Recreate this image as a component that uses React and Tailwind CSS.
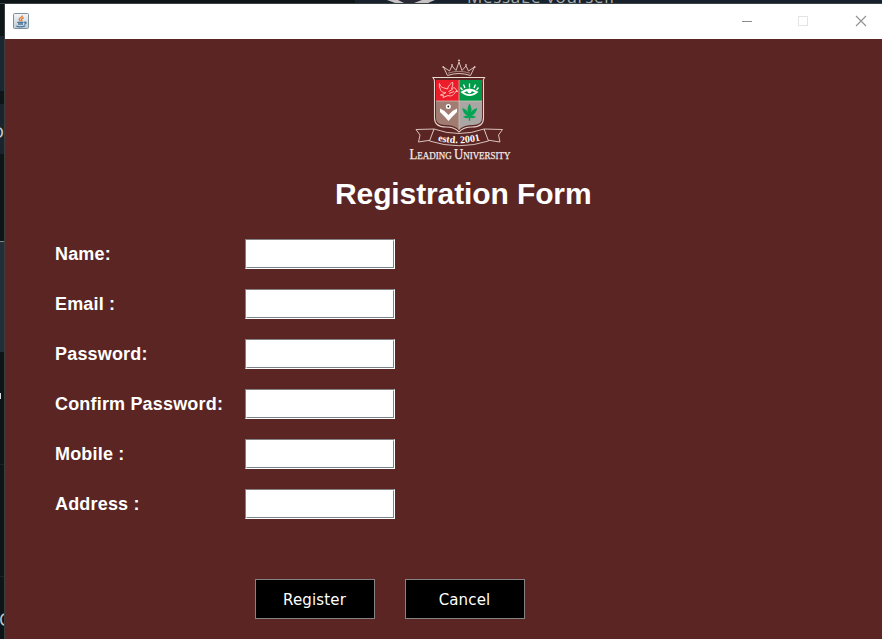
import React from "react";

const fields = ["Name:", "Email :", "Password:", "Confirm Password:", "Mobile :", "Address :"];

function JavaIcon() {
  return (
    <svg width="16" height="16" viewBox="0 0 16 16" className="-mt-[2px] block">
      <defs>
        <linearGradient id="jbg" x1="0" y1="0" x2="0" y2="1">
          <stop offset="0" stopColor="#f4f7f9" />
          <stop offset="1" stopColor="#bccbd6" />
        </linearGradient>
      </defs>
      <rect x="0.5" y="0.5" width="15" height="15" rx="1" fill="url(#jbg)" stroke="#7d8e9c" />
      <path d="M9.500 2.500C9.500 4.500 6 4.500 6.200 6.300C6.300 7.200 7.300 7.500 7.300 8.200M10.800 4.800C9 5.200 8.200 6 8.700 6.800C9.100 7.400 8.800 7.800 8.400 8.200" fill="none" stroke="#e8792b" strokeWidth="1.400" />
      <path d="M4.200 9.300H10.500M5 11H10M3.300 13.200C5.300 13.900 9.800 13.700 12.300 12.900M11 9.300C13.700 8.500 13.900 10.600 11.200 11.300" fill="none" stroke="#4d7599" strokeWidth="1.300" />
    </svg>
  );
}

function UniversityLogo() {
  return (
    <svg width="104" height="104" viewBox="408 58 104 104" className="block">
      <defs>
        <clipPath id="shield">
          <path d="M436 80H482V118Q482 125 473 125Q463 125 459 130Q455 125 445 125Q436 125 436 118Z" />
        </clipPath>
        <path id="motto" d="M430 138.500Q459 148 488 138" />
      </defs>
      <g fill="none" stroke="#d9c2bc" strokeWidth="1" strokeLinejoin="round">
        <path d="M447.500 75.500L443.500 67L449.500 71L452 66L456 70.500L459 62L462 70.500L466 66L468.500 71L474.500 67L470.500 75.500Q459 71.500 447.500 75.500Z" />
        <path d="M448 73.200Q459 69.500 470 73.200" strokeWidth="0.6" />
      </g>
      <g fill="#d9c2bc">
        <circle cx="443.200" cy="67" r="0.9" />
        <circle cx="452" cy="65" r="0.9" />
        <circle cx="459" cy="60.500" r="1.100" />
        <circle cx="466" cy="65" r="0.9" />
        <circle cx="474.700" cy="67" r="0.9" />
      </g>
      <path d="M433 77.500H484.500Q482.500 80 483.500 83V118Q483.500 127 472 127Q463 127 459 132Q455 127 446 127Q434.500 127 434.500 118V83Q435 80 433 77.500Z" fill="#5a2523" stroke="#ead8d2" strokeWidth="1.100" />
      <g clipPath="url(#shield)">
        <path d="M436 80H459V101H436Z" fill="#ed1c2b" />
        <path d="M459 80H482V101H459Z" fill="#009b48" />
        <path d="M436 101H459V132H436Z" fill="#a17c72" />
        <path d="M459 101H482V132H459Z" fill="#aaa6a4" />
        <path d="M459 80V131M436 101H482" stroke="#d7c5b9" strokeWidth="0.7" />
      </g>
      <path d="M439.500 83.500C440.500 88 443.500 87.500 447.500 89C448 85.500 451 84 452.500 82C453.500 84.500 452 87 451.500 89C453.500 87 456 87.800 456 90L457.800 91.300L455.500 91.700C454.500 94.500 451 97 448 95.500L443 97.500L443.500 95.500L440.500 95C443 94 445 93.500 446 92.500C442.500 92.500 440 91 440.500 89C439.500 88 439 86 439.500 83.500M448.500 91.500L452.500 89.500M449 93.500L454 91.500" fill="none" stroke="#ffc4bc" strokeWidth="1" strokeLinejoin="round" />
      <path d="M460.500 92Q469.500 85 478.500 92Q469.500 100 460.500 92Z" fill="#fff" />
      <path d="M464 92.500Q469.500 89 475 92.500Q469.500 96 464 92.500Z" fill="#009b48" />
      <circle cx="469.500" cy="91.300" r="2.100" fill="#fff" />
      <path d="M462.500 90L460.500 87.500M465 88L463.500 84.500M469.500 87.500V83.500M474 88L475.500 84.500M476.500 90L478.500 87.500" stroke="#fff" strokeWidth="1.300" />
      <path d="M440 108.500L444.500 111L448.500 115L452.500 111L457 108.500V112L452 117L448.500 121L445 117L440 112Z" fill="#fff" />
      <circle cx="448.300" cy="106.500" r="2.500" fill="#fff" />
      <circle cx="448.300" cy="106.500" r="0.9" fill="#211b19" />
      <path d="M469.500 104Q472.500 109 470.500 113Q473 109 477 108.500Q475.500 114 471 116Q473.500 115.500 475.500 117Q472.500 118.500 470 117.500V120.500H469V117.500Q466 118.500 463.500 117Q465.500 115.500 468 116Q463.500 114 462.500 108.500Q466 109 468.500 113Q466.500 109 469.500 104Z" fill="#00a551" stroke="#00a551" strokeWidth="0.500" />
      <g fill="#5a2523" stroke="#e6d2cc" strokeWidth="0.9" strokeLinejoin="round">
        <path d="M434 129L416 129.500L420 135L418.500 142L431.500 140Z" />
        <path d="M484 129L502.500 129.500L498.500 135L500 142L487 140Z" />
        <path d="M434 129Q459 138 484 129L488.500 141Q459 150.500 429.500 141Z" />
      </g>
      <text fill="#fff" fontFamily="Liberation Serif, serif" fontSize="10" fontWeight="bold" textAnchor="middle">
        <textPath href="#motto" startOffset="50%" textLength="43">estd. 2001</textPath>
      </text>
      <text x="409.500" y="159.300" fill="#f5ebe8" stroke="#f5ebe8" strokeWidth="0.250" fontFamily="Liberation Serif, serif" fontSize="10.500" fontWeight="normal" textLength="101" lengthAdjust="spacingAndGlyphs">
        <tspan fontSize="15">L</tspan>EADING <tspan fontSize="15">U</tspan>NIVERSITY
      </text>
    </svg>
  );
}

function WindowControls() {
  return (
    <svg width="130" height="16" viewBox="0 0 130 16" fill="none" className="-mt-[2px] mr-[10px] block" shapeRendering="crispEdges">
      <path d="M0 8.500H10" stroke="#8b8b8b" />
      <rect x="56.500" y="3.500" width="9" height="9" stroke="#e4e4e4" />
      <path d="M114 3L124 13M124 3L114 13" stroke="#909090" shapeRendering="auto" strokeWidth="1.100" />
    </svg>
  );
}

function BackdropTop() {
  return (
    <div className="flex h-[4px] w-full shrink-0 overflow-hidden border-b border-[#3c4347] bg-[#18222c]">
      <div className="h-full w-[355px] shrink-0 bg-[#0e1517]" />
      <svg width="112" height="3" viewBox="355 0 112 3" className="block shrink-0">
        <path d="M387 0H435L428 3H395Z" fill="#c9c2c4" />
        <path d="M398 0H422L414 3H404Z" fill="#292936" />
      </svg>
      <div className="-mt-[13px] h-[20px] w-[160px] whitespace-nowrap font-['Open_Sans',sans-serif] text-[17px] leading-[20px] tracking-[0.700px] text-[#a7adb0]">
        Message yourself
      </div>
    </div>
  );
}

function BackdropLeft() {
  return (
    <div className="flex w-[5px] shrink-0 flex-col overflow-hidden border-r border-[#3d3c3e] bg-[#0d1517] font-['Open_Sans',sans-serif] text-[#c9c9c9]">
      <div className="h-[32px] shrink-0" />
      <div className="h-[55px] shrink-0 bg-[#1a2630]" />
      <div className="h-[13px] shrink-0" />
      <div className="flex h-[50px] shrink-0 items-center justify-end bg-[#19242d] text-[20px] leading-none">
        <span className="mt-1">o</span>
      </div>
      <div className="h-[87px] shrink-0" />
      <div className="h-[111px] shrink-0 border-t border-[#818789] bg-[#222e38]" />
      <div className="h-[41px] shrink-0" />
      <div className="h-[6px] w-px shrink-0 bg-[#dedede]" />
      <div className="h-[66px] shrink-0 border-b border-[#1b2326]" />
      <div className="h-[112px] shrink-0 border-b border-[#1b2326]" />
      <div className="-ml-px mt-[33px] h-[18px] shrink-0 text-[18px] leading-[18px]">C</div>
    </div>
  );
}

function ActionButton({ children }) {
  return (
    <button className="flex h-[40px] w-[120px] items-center justify-center border border-[#848284] bg-black pr-px pt-[3px] font-['DejaVu_Sans',sans-serif] text-[15px] tracking-[0.150px] text-white">
      {children}
    </button>
  );
}

export default function App() {
  return (
    <div className="flex h-[639px] w-[882px] flex-col overflow-hidden">
      <BackdropTop />
      <div className="flex min-h-0 flex-1">
        <BackdropLeft />
        <div className="flex flex-1 flex-col bg-[#5a2523]">
          <header className="flex h-[35px] shrink-0 items-center justify-between bg-white pl-[8px]">
            <JavaIcon />
            <WindowControls />
          </header>
          <main className="flex flex-1 flex-col font-['Liberation_Sans',sans-serif] font-bold text-white">
            <div className="ml-[403px] mt-[19px] h-[104px]">
              <UniversityLogo />
            </div>
            <h1 className="ml-[330px] mt-[14px] h-[36px] whitespace-nowrap text-[30px] leading-[36px] tracking-[-0.110px]">Registration Form</h1>
            <form className="ml-[50px] mt-[27px] flex flex-col gap-[20px]">
              {fields.map((label) => (
                <label key={label} className="flex h-[30px] items-center">
                  <span className="w-[190px] whitespace-nowrap text-[18px] leading-[20px] tracking-[0.180px]">{label}</span>
                  <span className="flex h-[30px] w-[150px] border-b border-l border-r border-t border-b-white border-l-[#848284] border-r-white border-t-[#848284]">
                    <input aria-label={label} className="w-full border border-b-[#7c8289] border-l-white border-r-[#7c8289] border-t-white bg-white px-1 font-normal text-black outline-none" />
                  </span>
                </label>
              ))}
            </form>
            <div className="ml-[250px] mt-[60px] flex gap-[30px] font-normal">
              <ActionButton>Register</ActionButton>
              <ActionButton>Cancel</ActionButton>
            </div>
          </main>
        </div>
      </div>
    </div>
  );
}
